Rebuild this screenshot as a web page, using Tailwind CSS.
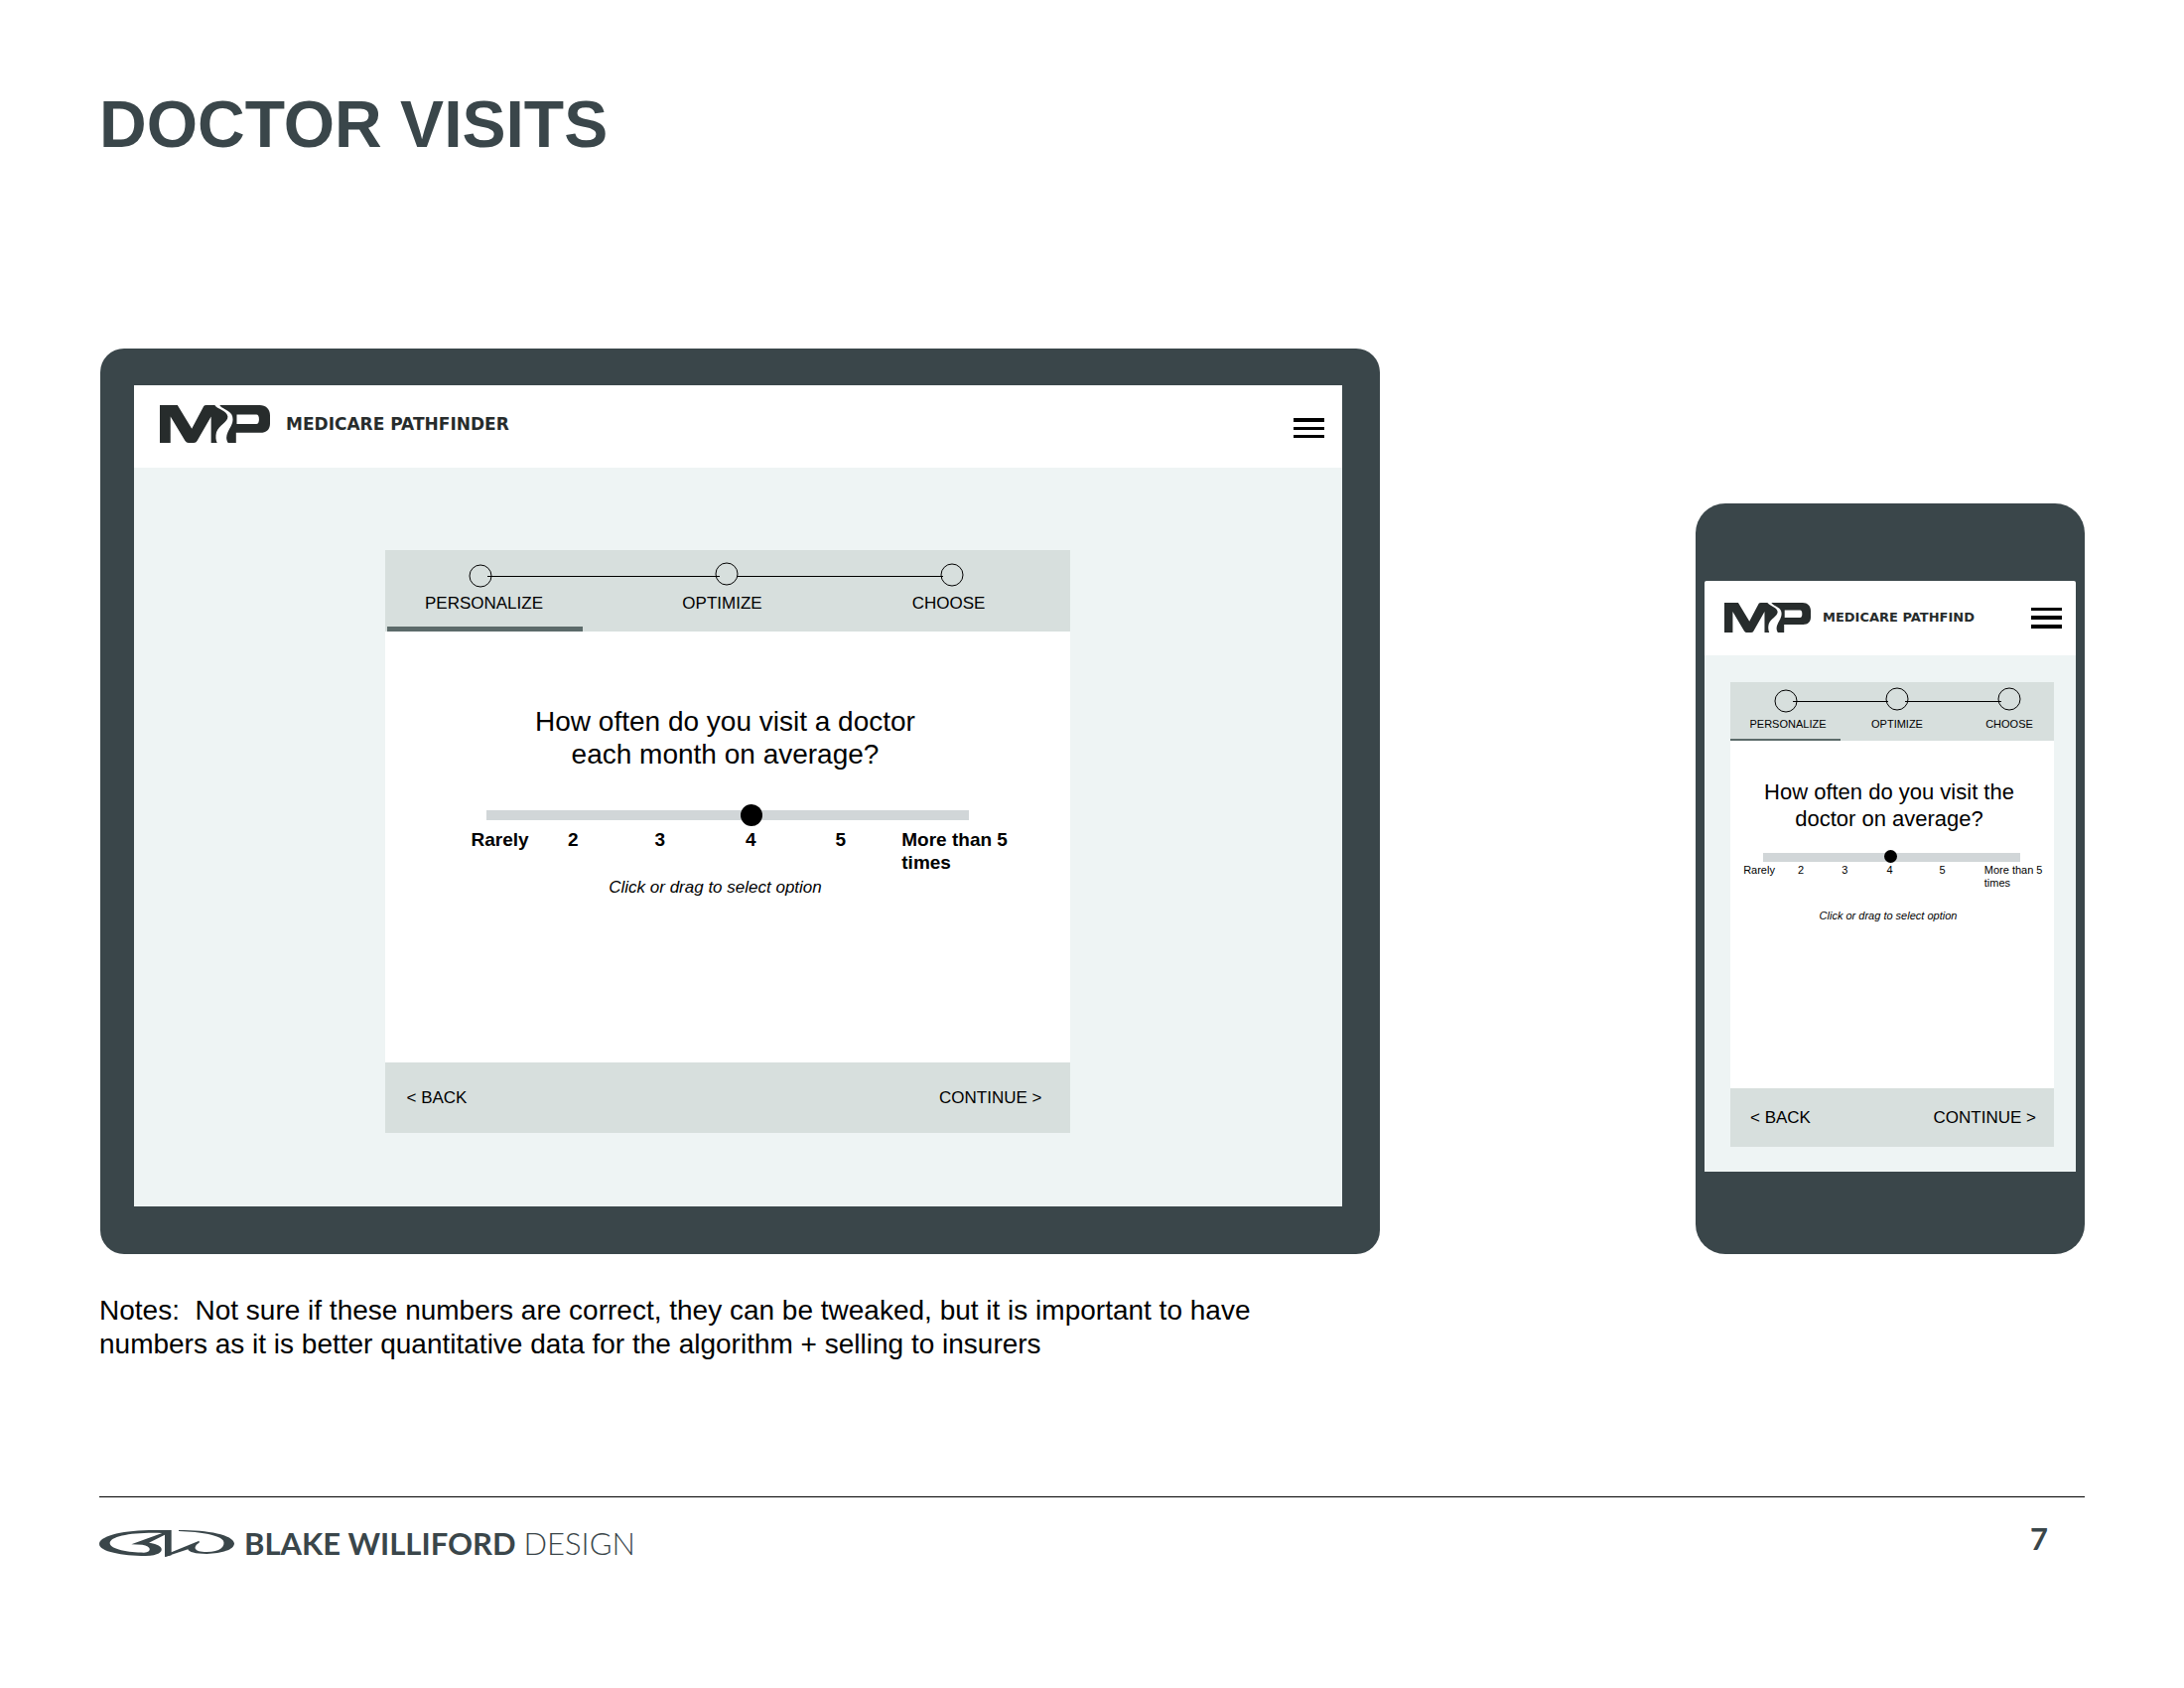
<!DOCTYPE html>
<html lang="en">
<head>
<meta charset="utf-8">
<meta name="viewport" content="width=device-width, initial-scale=1">
<title>Doctor Visits</title>
<script src="https://cdn.jsdelivr.net/npm/@tailwindcss/browser@4"></script>
</head>
<body class="min-h-screen bg-white font-['Liberation_Sans',Arial,sans-serif] text-black">

<!-- Shared logo artwork -->
<svg class="hidden" aria-hidden="true">
  <symbol id="mp" viewBox="0 0 331 112" preserveAspectRatio="none">
    <path d="M0 0H53L96 70 132 3Q134 0 140 0H165C172 12 202 16 204 34C205 50 178 60 170 80C167 92 168 104 172 112H154V34L112 106Q109 112 102 112H86Q80 112 76 106L32 34V112H0Z"/>
    <path fill-rule="evenodd" d="M180 0H300C318 0 331 12 331 30V55C331 72 320 82 302 82H229V112H205C194 95 204 80 214 62C222 45 222 28 205 18C195 10 184 8 180 0ZM231 28V56H290Q298 56 298 42Q298 28 290 28Z"/>
  </symbol>
</svg>

<div class="px-[100px] pt-[87px] pb-16">
  <h1 class="text-[66px] leading-[76px] font-bold text-[#3a464a]">DOCTOR VISITS</h1>

  <main>
    <div class="mt-[188px] grid grid-cols-[1289fr_318fr_392fr] items-end pl-px">

      <!-- Tablet -->
      <section aria-label="Tablet layout" class="rounded-3xl bg-[#3a464a] pt-[37px] pr-[38px] pb-12 pl-[34px]">
        <header class="flex h-[83px] items-center justify-between bg-white pr-[18px] pb-1.5 pl-[26px]">
          <a href="#" class="flex items-center gap-4 text-[#272c2c]">
            <svg class="h-[38px] w-[111px] fill-current" aria-hidden="true"><use href="#mp"/></svg>
            <span class="font-['DejaVu_Sans',sans-serif] text-[17px] leading-5 font-bold">MEDICARE PATHFINDER</span>
          </a>
          <button type="button" aria-label="Menu" class="flex w-[31px] flex-col gap-[5px] pt-2">
            <span class="h-1 w-full bg-black"></span>
            <span class="h-[3px] w-full bg-black"></span>
            <span class="h-[3px] w-full bg-black"></span>
          </button>
        </header>
        <div class="flex justify-center bg-[#eef4f4] pt-[83px] pr-[22px] pb-[74px]">
          <form class="w-full max-w-[690px] bg-white">
            <div class="bg-[#d7dfdd]">
              <svg class="block w-full" viewBox="0 0 690 40" fill="none" stroke="#000" aria-hidden="true">
                <circle cx="96" cy="26" r="11"/><circle cx="344" cy="24" r="11"/><circle cx="571" cy="25" r="11"/>
                <path d="M103 26.500H337M355 26.500H562"/>
              </svg>
              <ol class="grid h-[37px] grid-cols-[200fr_280fr_176fr] pr-[34px] text-center text-[17px] leading-7">
                <li aria-current="step">PERSONALIZE</li><li>OPTIMIZE</li><li>CHOOSE</li>
              </ol>
              <div class="ml-0.5 h-[5px] w-[197px] bg-[#5c6b6a]"></div>
            </div>
            <div class="h-[434px] pt-[74px]">
              <label for="visits-tablet" class="block pr-1 text-center text-[28px] leading-[33px]">How often do you visit a doctor<br>each month on average?</label>
              <div class="mt-[34px] px-[102px]">
                <input id="visits-tablet" type="range" min="1" max="6" step="any" value="3.76" class="block h-[22px] w-full appearance-none bg-transparent [&::-webkit-slider-runnable-track]:h-[10px] [&::-webkit-slider-runnable-track]:bg-[#d1d6d8] [&::-webkit-slider-thumb]:-mt-1.5 [&::-webkit-slider-thumb]:size-[22px] [&::-webkit-slider-thumb]:appearance-none [&::-webkit-slider-thumb]:rounded-full [&::-webkit-slider-thumb]:bg-black">
              </div>
              <div class="mt-0.5 grid grid-cols-[55fr_90fr_86fr_98fr_84fr_20fr_130fr] pr-10 pl-[87px] text-center text-[19px] leading-[23px] font-bold">
                <span>Rarely</span><span>2</span><span>3</span><span>4</span><span>5</span><span class="col-start-7 text-left">More than 5 times</span>
              </div>
              <p class="pr-6 text-center text-[17px] leading-7 italic">Click or drag to select option</p>
            </div>
            <div class="flex h-[71px] items-center justify-between bg-[#d7dfdd] pr-7 pl-[22px] text-[17px]">
              <button type="button">&lt; BACK</button>
              <button type="submit">CONTINUE &gt;</button>
            </div>
          </form>
        </div>
      </section>

      <!-- Phone -->
      <section aria-label="Phone layout" class="col-start-3 rounded-[30px] bg-[#3a464a] px-[9px] pt-[78px] pb-[83px]">
        <header class="flex h-[75px] items-center justify-between rounded-t-xs bg-white pr-3.5 pl-5">
          <a href="#" class="flex items-center gap-3 pb-0.5 text-[#272c2c]">
            <svg class="h-[30px] w-[87px] fill-current" aria-hidden="true"><use href="#mp"/></svg>
            <span class="font-['DejaVu_Sans',sans-serif] text-[13px] leading-5 font-bold whitespace-nowrap">MEDICARE PATHFIND</span>
          </a>
          <button type="button" aria-label="Menu" class="flex w-[31px] flex-col gap-[5px]">
            <span class="h-[3px] w-full bg-black"></span>
            <span class="h-1 w-full bg-black"></span>
            <span class="h-1 w-full bg-black"></span>
          </button>
        </header>
        <div class="bg-[#eef4f4] pt-[27px] pr-[22px] pb-[25px] pl-[26px]">
          <form class="bg-white">
            <div class="bg-[#d7dfdd]">
              <svg class="block w-full" viewBox="0 0 326 32" fill="none" stroke="#000" aria-hidden="true">
                <circle cx="56" cy="19" r="11"/><circle cx="168" cy="17" r="11"/><circle cx="281" cy="17" r="11"/>
                <path d="M63 19.500H159M176 19.500H273"/>
              </svg>
              <ol class="grid h-[25px] grid-cols-[84fr_136fr_90fr] pl-4 text-center text-[11px] leading-5">
                <li aria-current="step">PERSONALIZE</li><li>OPTIMIZE</li><li>CHOOSE</li>
              </ol>
              <div class="h-0.5 w-[111px] bg-[#5c6b6a]"></div>
            </div>
            <div class="h-[350px] pt-[38px]">
              <label for="visits-phone" class="block pr-1.5 text-center text-[22px] leading-[27px]">How often do you visit the<br>doctor on average?</label>
              <div class="mt-[19px] pr-[34px] pl-[33px]">
                <input id="visits-phone" type="range" min="1" max="6" step="any" value="3.47" class="block h-[13px] w-full appearance-none bg-transparent [&::-webkit-slider-runnable-track]:h-[9px] [&::-webkit-slider-runnable-track]:bg-[#d1d6d8] [&::-webkit-slider-thumb]:-mt-[3px] [&::-webkit-slider-thumb]:size-[13px] [&::-webkit-slider-thumb]:appearance-none [&::-webkit-slider-thumb]:rounded-full [&::-webkit-slider-thumb]:bg-black">
              </div>
              <div class="grid grid-cols-[34fr_50fr_38fr_52fr_54fr_15fr_70fr] pl-3 text-center text-[11px] leading-[13px]">
                <span>Rarely</span><span>2</span><span>3</span><span>4</span><span>5</span><span class="col-start-7 text-left">More than 5 times</span>
              </div>
              <p class="mt-5 pr-2 text-center text-[11px] leading-[13px] italic">Click or drag to select option</p>
            </div>
            <div class="flex h-[59px] items-center justify-between bg-[#d7dfdd] pr-[18px] pl-5 text-[17px]">
              <button type="button">&lt; BACK</button>
              <button type="submit">CONTINUE &gt;</button>
            </div>
          </form>
        </div>
      </section>
    </div>

    <p class="mt-10 max-w-[1200px] text-[28px] leading-[34px]">Notes:&nbsp; Not sure if these numbers are correct, they can be tweaked, but it is important to have numbers as it is better quantitative data for the algorithm + selling to insurers</p>
  </main>

  <footer class="mt-[136px] flex items-start justify-between border-t border-black pt-[26px] font-[Lato,sans-serif] text-[31px] leading-10 text-[#3a464a]">
    <a href="#" class="flex items-center gap-2.5">
      <svg class="h-[27px] w-[136px] fill-current" viewBox="0 0 408 81" aria-hidden="true">
        <path fill-rule="evenodd" d="M218 0H150C60 2 0 20 0 42C0 65 70 78 140 78C180 76 190 66 188 56C186 46 165 40 150 38L198 14V81L218 76ZM190 9C100 6 32 18 32 40C32 58 90 68 135 68C160 66 158 48 130 44L97 43Z"/>
        <path d="M198 81L268 58C270 66 290 72 325 72C370 70 408 60 408 40C404 14 330 0 240 0V3C310 5 365 16 375 32C382 48 365 66 325 66C285 66 282 50 302 38V32L214 68Z"/>
      </svg>
      <span><b class="font-bold">BLAKE WILLIFORD</b> <span class="font-light">DESIGN</span></span>
    </a>
    <span class="pr-[37px] leading-[30px] font-bold">7</span>
  </footer>
</div>
</body>
</html>
